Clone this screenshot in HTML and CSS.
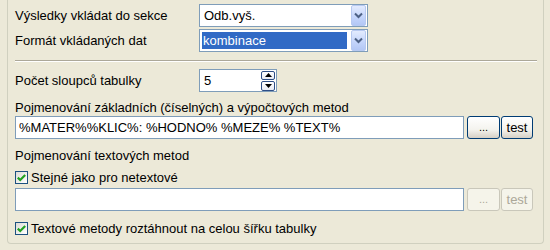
FILE: index.html
```html
<!DOCTYPE html>
<html lang="cs">
<head>
<meta charset="utf-8">
<title>Nastavení</title>
<link rel="stylesheet" href="styles.css">
</head>
<body>
<div class="panel">
  <div class="row r1">
    <span class="lbl">Výsledky vkládat do sekce</span>
    <div class="combo"><span class="val">Odb.vyš.</span><span class="drop"><svg width="9" height="7" viewBox="0 0 9 7"><path d="M1 1.5 L4.5 5 L8 1.5" fill="none" stroke="#4D6185" stroke-width="2"/></svg></span></div>
  </div>
  <div class="row r2">
    <span class="lbl">Formát vkládaných dat</span>
    <div class="combo"><span class="val sel">kombinace</span><span class="drop"><svg width="9" height="7" viewBox="0 0 9 7"><path d="M1 1.5 L4.5 5 L8 1.5" fill="none" stroke="#4D6185" stroke-width="2"/></svg></span></div>
  </div>
  <div class="sep"></div>
  <div class="row r3">
    <span class="lbl">Počet sloupců tabulky</span>
    <div class="spin"><span class="val">5</span><span class="arrows"><span class="sb"><svg width="7" height="4" viewBox="0 0 7 4"><path d="M0 4 L3.5 0 L7 4Z" fill="#000"/></svg></span><span class="sb"><svg width="7" height="4" viewBox="0 0 7 4"><path d="M0 0 L3.5 4 L7 0Z" fill="#000"/></svg></span></span></div>
  </div>
  <div class="caption c1">Pojmenování základních (číselných) a výpočtových metod</div>
  <div class="line l1">
    <div class="edit">%MATER%%KLIC%: %HODNO% %MEZE% %TEXT%</div>
    <span class="btn dots">...</span>
    <span class="btn test">test</span>
  </div>
  <div class="caption c2">Pojmenování textových metod</div>
  <div class="check k1"><span class="box"><svg width="9" height="8" viewBox="0 0 9 8"><path d="M0.8 3.6 L3.2 6 L8.2 1" fill="none" stroke="#21A121" stroke-width="2.2"/></svg></span>Stejné jako pro netextové</div>
  <div class="line l2">
    <div class="edit"></div>
    <span class="btn dots off">...</span>
    <span class="btn test off">test</span>
  </div>
  <div class="check k2"><span class="box"><svg width="9" height="8" viewBox="0 0 9 8"><path d="M0.8 3.6 L3.2 6 L8.2 1" fill="none" stroke="#21A121" stroke-width="2.2"/></svg></span>Textové metody roztáhnout na celou šířku tabulky</div>
</div>
</body>
</html>
```
FILE: styles.css
```css
html, body {
  margin: 0;
  padding: 0;
  background: #ECE9D8;
}
body {
  font-family: "Liberation Sans", Arial, sans-serif;
  font-size: 13px;
  line-height: 15px;
  color: #000;
}
.panel {
  box-sizing: border-box;
  margin-left: 7px;
  width: 537px;
  height: 244px;
  border: 1px solid #D0D0BF;
  border-top: none;
  border-radius: 0 0 4px 4px;
  padding: 0 7px;
  display: flex;
  flex-direction: column;
}
.row {
  display: flex;
  align-items: center;
  height: 23px;
}
.r1 { margin-top: 4px; }
.r2 { margin-top: 2px; }
.r3 { margin-top: 7px; }
.lbl {
  width: 184px;
  flex: none;
}
.combo {
  box-sizing: border-box;
  width: 169px;
  height: 23px;
  border: 1px solid #7F9DB9;
  background: #fff;
  display: flex;
  align-items: center;
  padding: 0 1px 0 2px;
}
.combo .val {
  flex: 1;
  height: 17px;
  line-height: 17px;
  padding-left: 2px;
  margin-right: 4px;
}
.combo .val.sel {
  background: #316AC5;
  color: #fff;
  padding-left: 1px;
}
.drop {
  box-sizing: border-box;
  width: 15px;
  height: 21px;
  border: 1px solid #B7C9F1;
  border-radius: 2px;
  background: linear-gradient(#E3EBFE, #C3D4FB 60%, #B3C7F5);
  display: flex;
  align-items: center;
  justify-content: center;
}
.sep {
  margin-top: 8px;
  width: 522px;
  height: 0;
  border-top: 1px solid #ACA899;
  border-bottom: 1px solid #fff;
}
.spin {
  box-sizing: border-box;
  width: 78px;
  height: 23px;
  border: 1px solid #7F9DB9;
  background: #fff;
  display: flex;
  align-items: center;
  padding: 1px 1px 1px 4px;
}
.spin .val { flex: 1; }
.arrows {
  display: flex;
  flex-direction: column;
  gap: 1px;
  width: 14px;
  height: 20px;
}
.sb {
  box-sizing: border-box;
  flex: 1;
  border: 1px solid #2E4E86;
  border-radius: 2px;
  background: linear-gradient(#FFFFFF, #E8EBF4);
  display: flex;
  align-items: center;
  justify-content: center;
}
.caption { height: 15px; }
.c1 { margin-top: 8px; }
.c2 { margin-top: 9px; }
.line {
  display: flex;
  align-items: center;
  height: 23px;
}
.l1 { margin-top: 1px; }
.l2 { margin-top: 3px; }
.edit {
  box-sizing: border-box;
  width: 449px;
  height: 23px;
  border: 1px solid #7F9DB9;
  background: #fff;
  padding-left: 3px;
  line-height: 21px;
  white-space: nowrap;
  overflow: hidden;
}
.btn {
  box-sizing: border-box;
  height: 23px;
  border: 1px solid #003C74;
  border-radius: 3px;
  background: linear-gradient(#FFFFFF, #F4F3EE 60%, #D6D0C5);
  display: flex;
  align-items: center;
  justify-content: center;
  line-height: 15px;
}
.dots {
  width: 33px;
  margin-left: 3px;
  font-size: 11px;
}
.test {
  width: 32px;
  margin-left: 1px;
}
.btn.off {
  border-color: #C9C7BA;
  background: #F5F4EA;
  color: #ACA899;
}
.check {
  display: flex;
  align-items: center;
  height: 15px;
}
.k1 { margin-top: 7px; }
.k2 { margin-top: 10px; }
.box {
  box-sizing: border-box;
  width: 13px;
  height: 13px;
  border: 1px solid #1C5180;
  background: linear-gradient(135deg, #DCDCD7, #FFFFFF);
  margin-right: 3px;
  display: flex;
  align-items: center;
  justify-content: center;
}
```
